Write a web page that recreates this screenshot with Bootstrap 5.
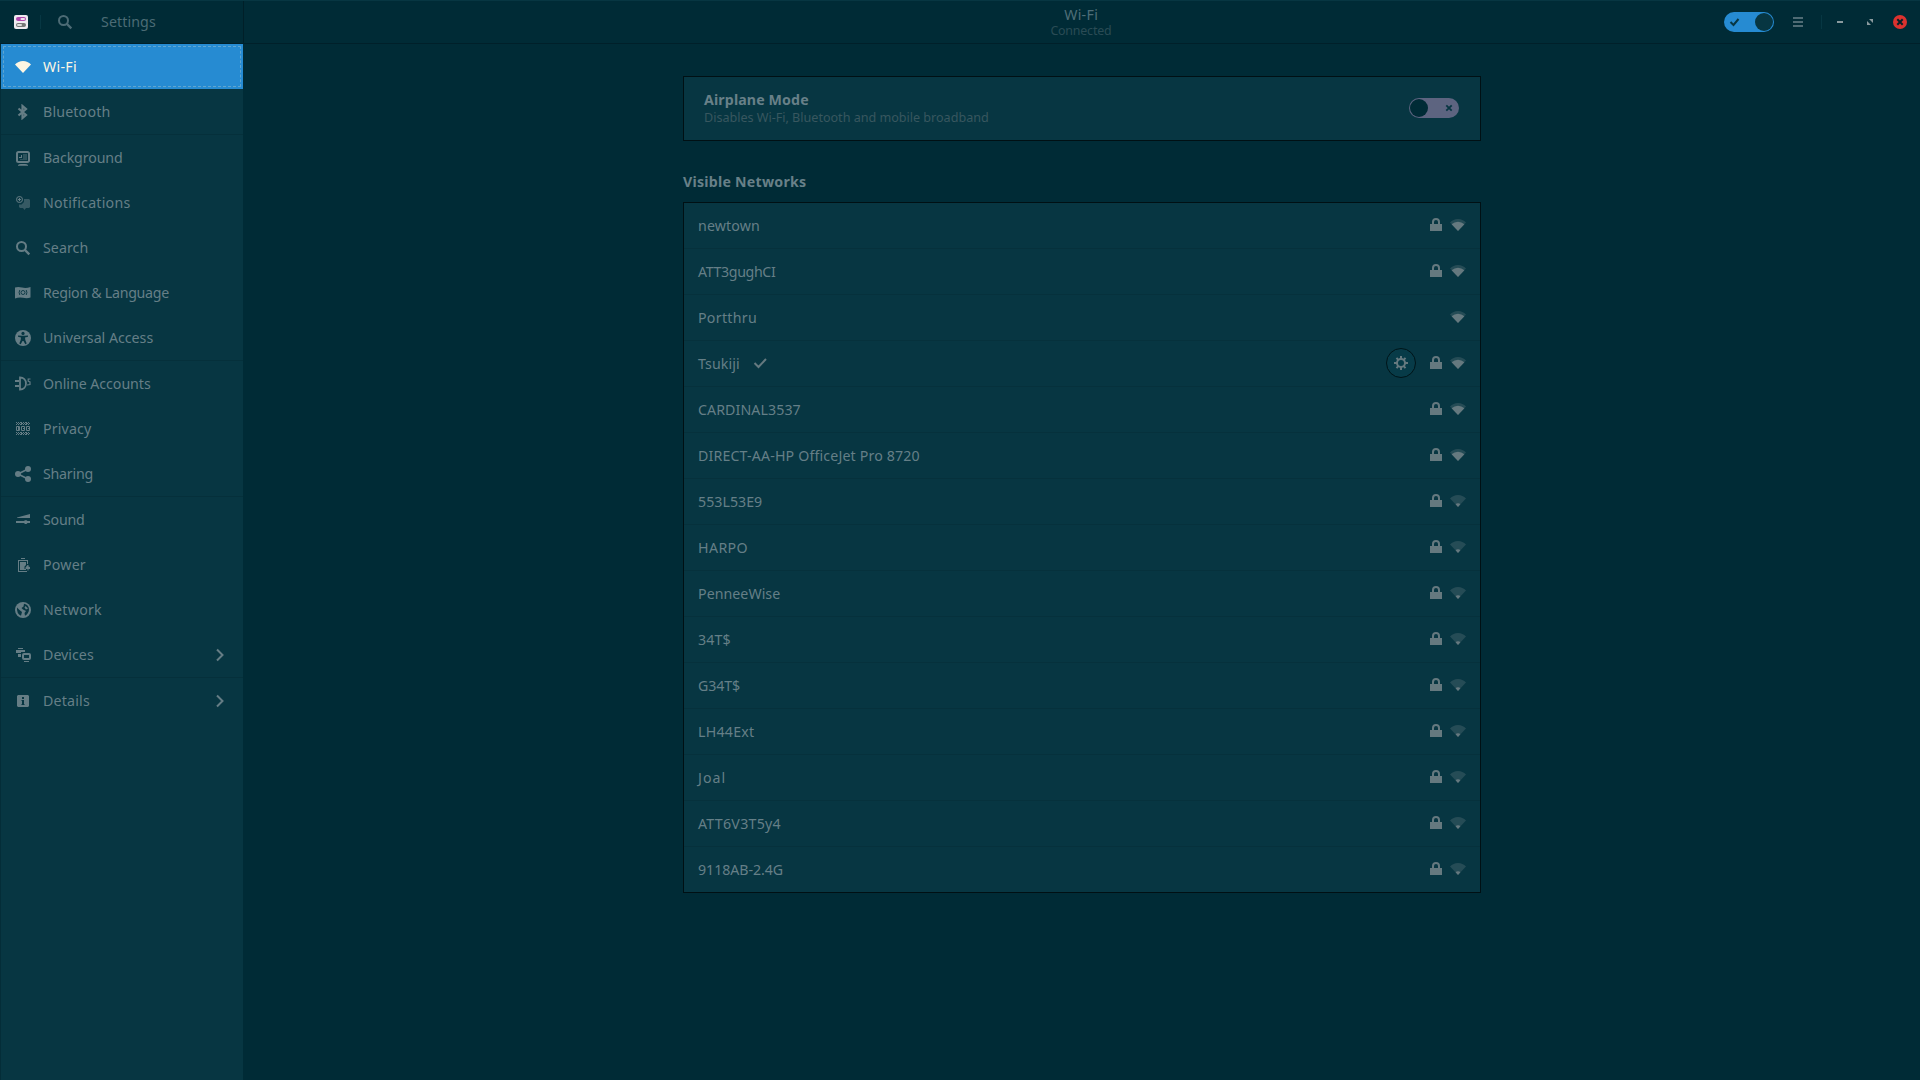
<!DOCTYPE html>
<html lang="en">
<head>
<meta charset="utf-8">
<title>Settings</title>
<meta name="viewport" content="width=device-width, initial-scale=1">
<link href="https://cdn.jsdelivr.net/npm/bootstrap@5.3.0/dist/css/bootstrap.min.css" rel="stylesheet">
<style>
  :root { --base03:#002b36; --base02:#073642; --fg:#657f87; --ico:#657d85; --blue:#268bd2; }
  body { font-family:"Noto Sans","Open Sans",sans-serif; font-size:14.2px; line-height:20px; color:var(--fg); background:var(--base03); height:100vh; overflow:hidden; }
  svg { display:block; flex:none; fill:currentColor; }
  .fit { white-space:nowrap; display:inline-block; }
  .topbar { height:44px; border-bottom:1px solid #00202a; box-shadow:inset 0 2px 0 -1px #073642; padding-top:1px; }
  .topbar-left { width:244px; height:42px; border-right:1px solid #001f28; color:#4c6b75; padding-left:14px; }
  .vline { width:1px; height:14px; background:#073743; }
  .vline-app { margin-left:12px; }
  .win-titles { margin-left:-1px; padding-top:1px; }
  .win-title { color:#4f6e78; line-height:16px; }
  .win-sub { color:#2a4b55; font-size:12.4px; line-height:15px; }
  #app-name { margin-left:4px; }
  #controls { padding-right:13px; color:#8a9a9e; }
  #menu { margin:0 18px 0 19px; color:#4f6b74; }
  #min { margin:0 24px 0 15px; }
  #max { margin-right:20px; }
  .side { width:243px; background:var(--base02); border-left:1px solid #042d38; }
  .side .list-group-item { height:45px; padding:0 15px 0 14px; gap:12px; background:transparent; border:0; color:var(--fg); }
  .side .list-group-item svg { color:var(--ico); }
  .side .list-group-item.active { background:var(--blue); color:#fdf6e3; position:relative; margin:0; z-index:auto; }
  .side .list-group-item.active svg { color:#fdf6e3; }
  .side .list-group-item.active::after { content:""; position:absolute; inset:2px; border:1px dashed #5fa5cf; border-radius:1px; }
  .group-line { height:1px; background:#05303b; }
  .page { width:798px; margin:32px auto 0; }
  .panel { background:var(--base02); border:1px solid #001014; border-radius:0; }
  .airplane { height:65px; padding:0 21px 2px 20.500px; }
  .airplane-text { padding-top:1px; }
  .airplane-note { color:#38575f; font-size:12.6px; line-height:17px; margin-top:-1px; }
  .bold-label { font-weight:700; color:#688088; }
  #heading { padding-top:31px; height:61px; }
  #heading .fit { margin-left:.5px; }
  .net { height:45px; padding:0 14px 0 14.500px; box-sizing:content-box; border-bottom:1px solid #06313c; }
  .net:last-child { border-bottom:0; }
  .net svg { color:#65797f; }
  .net-icons { padding-bottom:1px; }
  .gear { width:30px; height:30px; border:1px solid #001418; border-radius:50%; background:#073b48; margin-right:12px; }
  .me-lock { margin-right:6px; }
  .tick { margin-left:12px; margin-bottom:1px; }
  .switchy { width:50px; height:20px; border-radius:10px; padding:1px; }
  .switchy i { width:18px; height:18px; border-radius:50%; display:block; }
  .switchy svg { color:#073642; }
  .sw-on { background:var(--blue); }
  .sw-on i { background:#073642; }
  .sw-off { background:#5d6480; }
  .sw-off i { background:#002b36; }
  #off-x { margin-right:5px; }
</style>
<script src="https://cdn.jsdelivr.net/npm/bootstrap@5.3.0/dist/js/bootstrap.bundle.min.js"></script>
</head>
<body class="d-flex flex-column">

<svg width="0" height="0" class="position-absolute">
  <defs>
    <symbol id="wifi" viewBox="0 0 16 16"><path d="M8 14 0 5.6Q3.2 2 8 2t8 3.600z"/></symbol>
    <symbol id="wifi-good" viewBox="0 0 16 16"><path opacity=".33" d="M8 14 0 5.600Q3.200 2 8 2t8 3.600z"/><path d="M8 14 1.600 7.300Q4.500 4.800 8 4.800t6.400 2.500z"/></symbol>
    <symbol id="wifi-weak" viewBox="0 0 16 16"><path opacity=".33" d="M8 14 0 5.600Q3.200 2 8 2t8 3.600z"/><path d="M8 14 5.600 11.300Q6.500 10.300 8 10.300t2.400 1z"/></symbol>
    <symbol id="lock" viewBox="0 0 16 16"><path d="M2 7h2V5a4 4 0 0 1 8 0v2h2v7H2zm4 0h4V5a2 2 0 0 0-4 0z"/></symbol>
    <symbol id="bluetooth" viewBox="0 0 16 16"><path fill="none" stroke="currentColor" stroke-width="2.200" d="M3.500 4.500 11 11l-3.500 3V2L11 5l-7.500 6.500"/></symbol>
    <symbol id="background" viewBox="0 0 16 16"><path fill="none" stroke="currentColor" stroke-width="2" d="M3.500 2h9A1.500 1.500 0 0 1 14 3.500v7a1.500 1.500 0 0 1-1.500 1.500h-9A1.500 1.500 0 0 1 2 10.500v-7A1.500 1.500 0 0 1 3.500 2z"/><path opacity=".4" d="M8 4h4v6H5V9h3z"/><path d="M4 7h2V5h1v3H4zM3 15q1-1 3-1h4q2 0 3 1v.7H3z"/></symbol>
    <symbol id="notify" viewBox="0 0 16 16"><path opacity=".5" d="M9 4h5l1 1v7l-1 1h-3l-1.500 2L8 13H5l-1-1V9.500h2.500L9 7z"/><path fill="none" stroke="currentColor" d="M4.500 1.500a3 3 0 1 1 0 6 3 3 0 0 1 0-6zm0 1.300v3.400M2.800 4.500h3.400"/></symbol>
    <symbol id="search" viewBox="0 0 16 16"><path fill="none" stroke="currentColor" stroke-width="2" d="M6.500 2a4.500 4.500 0 1 1 0 9 4.500 4.500 0 0 1 0-9z"/><path fill="none" stroke="currentColor" stroke-width="2.400" d="m9.500 9.500 4.800 4.800"/></symbol>
    <symbol id="flag" viewBox="0 0 16 16"><path d="M0 2.600q3-1.200 7 0t8.500-.6V12.600q-3.500 1.200-7.500.2T0 13.600z"/><g fill="none" stroke="#073642" stroke-width=".9"><circle cx="8" cy="7.500" r="2"/><path d="M4.800 5q-1.400 2.500 0 5M11.200 5q1.400 2.500 0 5"/></g></symbol>
    <symbol id="access" viewBox="0 0 16 16"><circle cx="8" cy="8" r="8"/><g fill="#073642"><circle cx="8" cy="3.400" r="1.600"/><path d="m3 5.500 3.500.3h3l3.500-.3v1.300l-3 .8.300 2.400 1.400 3.600-1.400.6L8.500 11h-1l-1.800 3.200-1.400-.6L5.700 10 6 7.600l-3-.8z"/></g></symbol>
    <symbol id="plug" viewBox="0 0 16 16"><path d="M0 4h4v2H0zm0 5h4v2H0z"/><path fill="none" stroke="currentColor" stroke-width="1.800" d="M5 1.500v12c3.500 0 6-2.500 6-6s-2.500-6-6-6z"/><path fill="none" stroke="currentColor" stroke-width="1.200" d="M15.500 3H13.200v2.200L15 6v2.500L12 9"/></symbol>
    <symbol id="privacy" viewBox="0 0 16 16"><path fill="none" stroke="currentColor" d="M1.500 5.500h3v4h-3zM6.500 5.500h3v4h-3zM11.500 5.500h3v4h-3zM3.500 6v3M8 7.500h2M13 7.500h2"/><path fill="none" stroke="currentColor" stroke-dasharray="1 1 1 1 1 0" d="M1 1.500h14M2 2.500h13M1 3.500h14M1 11.500h14M2 12.500h13M1 13.500h14"/></symbol>
    <symbol id="share" viewBox="0 0 16 16"><circle cx="3" cy="8" r="3"/><circle cx="13" cy="3" r="3"/><circle cx="13" cy="13" r="3"/><path fill="none" stroke="currentColor" stroke-width="1.600" d="M13 3 3 8l10 5"/></symbol>
    <symbol id="sound" viewBox="0 0 16 16"><path d="M2 5.500 15 2v4H2zM1 9h8l1-.8h1.500L12.500 9H15v2h-2.500l-1 1H10l-1-1H1z"/></symbol>
    <symbol id="power" viewBox="0 0 16 16"><path d="M6 1h4v1H6zM3 3h10v4h-1V4H4v10h8v1H3z"/><path d="M5 5h6v3L9.500 9.500V12H11v1H5z"/><path d="M12.500 8h1v1.500l1.500.5v2h-1.500v1.500h-1V12h-2v-1.500z"/></symbol>
    <symbol id="globe" viewBox="0 0 16 16"><circle cx="8" cy="8" r="8"/><path fill="#073642" d="M9 1.800q5 1 5 6-.5 4-4 6L9.500 11l1.500-2-3-1.500L6.500 6l2-1.500zM2 5.500 4.500 8 7 10l-1 3.700Q1.500 12 2 5.500z"/><path d="M10.500 4 13 6.500l-2 1-1.500-2z"/></symbol>
    <symbol id="devices" viewBox="0 0 16 16"><path d="M3 1h5v1H3zM1 3h9v2H6v1H1zM3 7h3v3H3zM9 14h5v1H9z"/><rect x="8" y="7" width="7" height="5" rx="1" fill="none" stroke="currentColor" stroke-width="2"/></symbol>
    <symbol id="info" viewBox="0 0 16 16"><path fill-rule="evenodd" d="M3 2h10l1 1v10l-1 1H3l-1-1V3zm4 2v2h2V4zM6.500 7v1H7v3h-.5v1h3v-1H9V7z"/></symbol>
    <symbol id="chevron" viewBox="0 0 16 16"><path fill="none" stroke="currentColor" stroke-width="2" d="m5 2.500 5.500 5.500L5 13.500"/></symbol>
    <symbol id="check" viewBox="0 0 16 16"><path fill="none" stroke="currentColor" stroke-width="2" d="m2.500 8 4 4 7.500-8"/></symbol>
    <symbol id="cog" viewBox="0 0 16 16"><circle cx="8" cy="8" r="4" fill="none" stroke="currentColor" stroke-width="2"/><path fill="none" stroke="currentColor" stroke-width="2" d="M8 1v3M8 12v3M1 8h3M12 8h3M3.500 2.800l2 2.300M12.500 2.800l-2 2.300M3.500 13.200l2-2.300M12.500 13.200l-2-2.300"/></symbol>
  </defs>
</svg>

<header class="topbar d-flex align-items-center flex-shrink-0">
  <div class="topbar-left d-flex align-items-center flex-shrink-0">
    <svg width="14" height="14" viewBox="0 0 14 14"><rect width="14" height="14" rx="2" fill="#efeaf0"/><rect x="2" y="2" width="10" height="4" rx="2" fill="#b046ad"/><rect x="6.500" y="3" width="4.500" height="2" rx="1" fill="#efe3ef"/><rect x="2" y="8" width="10" height="4" rx="2" fill="#777"/><rect x="3" y="9" width="5" height="2" rx="1" fill="#ddd"/></svg>
    <span class="vline vline-app"></span>
    <svg width="16" height="16" class="ms-3 me-4"><use href="#search"/></svg>
    <span class="fit" data-w="54" id="app-name">Settings</span>
  </div>
  <div class="flex-grow-1 d-flex position-relative align-items-center h-100">
    <div class="win-titles d-flex flex-column align-items-center position-absolute start-50 translate-middle-x">
      <span class="fit win-title" data-w="33">Wi-Fi</span>
      <span class="fit win-sub" data-w="60.500">Connected</span>
    </div>
    <div class="d-flex align-items-center ms-auto" id="controls">
      <div class="switchy sw-on d-flex align-items-center justify-content-between"><svg width="12" height="12" viewBox="0 0 12 12" class="ms-1"><path fill="none" stroke="currentColor" stroke-width="2" d="m1.500 6 3 3 5-6"/></svg><i></i></div>
      <svg width="10" height="10" viewBox="0 0 10 10" id="menu"><path d="M0 0h10v2H0zm0 4h10v2H0zm0 4h10v2H0z"/></svg>
      <span class="vline"></span>
      <svg width="6" height="2" viewBox="0 0 6 2" id="min"><path d="M0 0h6v2H0z"/></svg>
      <svg width="6" height="6" viewBox="0 0 6 6" id="max"><path d="M2 0h4v4zM0 2v4h4z"/></svg>
      <svg width="14" height="14" viewBox="0 0 14 14" id="close"><circle cx="7" cy="7" r="7" fill="#dc322f"/><path stroke="#06212a" stroke-width="2" d="m4.300 4.300 5.400 5.400m0-5.400L4.300 9.700"/></svg>
    </div>
  </div>
</header>

<div class="d-flex flex-grow-1">
  <nav class="side flex-shrink-0"><div class="list-group list-group-flush" id="side"></div></nav>
  <main class="flex-grow-1">
    <div class="page">
      <section class="panel airplane d-flex align-items-center justify-content-between">
        <div class="airplane-text d-flex flex-column">
          <span class="fit bold-label align-self-start" data-w="104">Airplane Mode</span>
          <span class="fit airplane-note align-self-start" data-w="284">Disables Wi-Fi, Bluetooth and mobile broadband</span>
        </div>
        <div class="switchy sw-off d-flex align-items-center justify-content-between"><i></i><svg width="8" height="8" viewBox="0 0 8 8" id="off-x"><path stroke="currentColor" stroke-width="1.800" d="m1.300 1.300 5.400 5.400m0-5.400L1.300 6.700"/></svg></div>
      </section>
      <div id="heading"><span class="fit bold-label" data-w="122.500">Visible Networks</span></div>
      <section class="panel" id="nets"></section>
    </div>
  </main>
</div>

<script>
  const icon = (n, c = '') => `<svg width="16" height="16" class="${c}"><use href="#${n}"/></svg>`;
  // [icon, label, label width]; null marks a group separator
  const sections = [['wifi','Wi-Fi',33],['bluetooth','Bluetooth',66.5],null,
    ['background','Background',79],['notify','Notifications',86.5],['search','Search',44.5],['flag','Region &amp; Language',125.5],['access','Universal Access',109.5],null,
    ['plug','Online Accounts',107],['privacy','Privacy',47.5],['share','Sharing',49.5],null,
    ['sound','Sound',41],['power','Power',42],['globe','Network',58],['devices','Devices',50],null,['info','Details',46]];
  document.getElementById('side').innerHTML = sections.map((s, i) => !s ? '<div class="group-line"></div>' :
    `<a class="list-group-item d-flex align-items-center ${i ? '' : 'active'}">${icon(s[0])}<span class="fit" data-w="${s[2]}">${s[1]}</span>${/^De/.test(s[1]) ? icon('chevron', 'ms-auto') : ''}</a>`).join('');

  // [name, label width, strong signal, secured, connected]
  const nets = [['newtown',61,1,1],['ATT3gughCI',77,1,1],['Portthru',58,1,0],['Tsukiji',41,1,1,1],['CARDINAL3537',102,1,1],['DIRECT-AA-HP OfficeJet Pro 8720',221,1,1],
    ['553L53E9',63.5,0,1],['HARPO',49,0,1],['PenneeWise',81.5,0,1],['34T$',32,0,1],['G34T$',41.5,0,1],['LH44Ext',55.5,0,1],['Joal',26.5,0,1],['ATT6V3T5y4',82,0,1],['9118AB-2.4G',84.5,0,1]];
  document.getElementById('nets').innerHTML = nets.map(n =>
    `<div class="net d-flex align-items-center"><span class="fit" data-w="${n[1]}">${n[0]}</span>${n[4] ? icon('check', 'tick') : ''}
     <div class="net-icons d-flex align-items-center ms-auto">${n[4] ? `<span class="gear d-flex align-items-center justify-content-center">${icon('cog')}</span>` : ''}${n[3] ? icon('lock', 'me-lock') : ''}${icon(n[2] ? 'wifi-good' : 'wifi-weak')}</div></div>`).join('');

  // Track each label so that it fills its intended width
  document.querySelectorAll('.fit').forEach(e => {
    const n = e.textContent.length;
    const ls = (+e.dataset.w + 0.7 - e.getBoundingClientRect().width) / (n - 1);
    e.style.letterSpacing = ls.toFixed(3) + 'px';
    e.style.marginRight = (-ls).toFixed(3) + 'px';
  });
</script>
</body>
</html>
